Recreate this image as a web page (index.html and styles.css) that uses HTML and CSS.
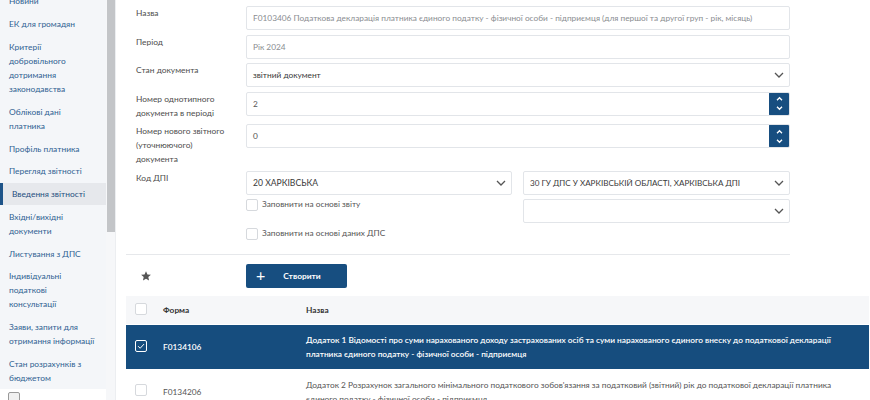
FILE: index.html
```html
<!DOCTYPE html>
<html lang="uk">
<head>
<meta charset="utf-8">
<title>Введення звітності</title>
<link rel="stylesheet" href="styles.css">
</head>
<body>
<div class="page">
  <aside class="sidebar">
    <div class="navwrap">
      <ul class="nav">
        <li>Новини</li>
        <li>ЕК для громадян</li>
        <li>Критерії<br>добровільного<br>дотримання<br>законодавства</li>
        <li>Облікові дані<br>платника</li>
        <li>Профіль платника</li>
        <li>Перегляд звітності</li>
        <li class="active">Введення звітності</li>
        <li>Вхідні/вихідні<br>документи</li>
        <li>Листування з ДПС</li>
        <li>Індивідуальні<br>податкові<br>консультації</li>
        <li>Заяви, запити для<br>отримання інформації</li>
        <li>Стан розрахунків з<br>бюджетом</li>
      </ul>
      <div class="navfoot"><span class="footbox"></span></div>
    </div>
    <div class="scrollbar"><div class="thumb"></div></div>
  </aside>
  <main class="main">
    <div class="form">
      <div class="row">
        <div class="label">Назва</div>
        <div class="field"><div class="input muted">F0103406 Податкова декларація платника єдиного податку - фізичної особи - підприємця (для першої та другої груп - рік, місяць)</div></div>
      </div>
      <div class="row">
        <div class="label">Період</div>
        <div class="field"><div class="input muted">Рік 2024</div></div>
      </div>
      <div class="row">
        <div class="label">Стан документа</div>
        <div class="field"><div class="input select dark"><span>звітний документ</span><svg class="chev" viewBox="0 0 10 6"><path d="M1 1l4 4 4-4"/></svg></div></div>
      </div>
      <div class="row">
        <div class="label">Номер однотипного<br>документа в періоді</div>
        <div class="field"><div class="input spin"><span>2</span><div class="spinbtn"><svg viewBox="0 0 10 6"><path d="M2 5l3-3 3 3"/></svg><svg viewBox="0 0 10 6"><path d="M2 1l3 3 3-3"/></svg></div></div></div>
      </div>
      <div class="row">
        <div class="label">Номер нового звітного<br>(уточнюючого)<br>документа</div>
        <div class="field"><div class="input spin"><span>0</span><div class="spinbtn"><svg viewBox="0 0 10 6"><path d="M2 5l3-3 3 3"/></svg><svg viewBox="0 0 10 6"><path d="M2 1l3 3 3-3"/></svg></div></div></div>
      </div>
      <div class="row">
        <div class="label">Код ДПІ</div>
        <div class="field split">
          <div class="col">
            <div class="input select dark caps"><span>20 ХАРКІВСЬКА</span><svg class="chev" viewBox="0 0 10 6"><path d="M1 1l4 4 4-4"/></svg></div>
            <label class="check"><span class="box"></span><span>Заповнити на основі звіту</span></label>
            <label class="check second"><span class="box"></span><span>Заповнити на основі даних ДПС</span></label>
          </div>
          <div class="col">
            <div class="input select dark caps narrow"><span>30 ГУ ДПС У ХАРКІВСЬКІЙ ОБЛАСТІ, ХАРКІВСЬКА ДПІ</span><svg class="chev" viewBox="0 0 10 6"><path d="M1 1l4 4 4-4"/></svg></div>
            <div class="input select"><span></span><svg class="chev" viewBox="0 0 10 6"><path d="M1 1l4 4 4-4"/></svg></div>
          </div>
        </div>
      </div>
      <div class="divider"></div>
      <div class="actions">
        <div class="star"><svg viewBox="0 0 24 24"><path d="M12 2.5l2.9 6.3 6.9.7-5.2 4.6 1.5 6.8L12 17.4l-6.1 3.5 1.5-6.8-5.2-4.6 6.9-.7z"/></svg></div>
        <button class="btn"><span class="plus">+</span><span>Створити</span></button>
      </div>
    </div>
    <table class="table">
      <thead>
        <tr><th class="cb"><span class="box"></span></th><th class="code">Форма</th><th>Назва</th></tr>
      </thead>
      <tbody>
        <tr class="sel">
          <td class="cb"><span class="box checked"><svg viewBox="0 0 12 12"><path d="M2.5 6.2l2.5 2.5 4.6-5"/></svg></span></td>
          <td class="code">F0134106</td>
          <td>Додаток 1 Відомості про суми нарахованого доходу застрахованих осіб та суми нарахованого єдиного внеску до податкової декларації платника єдиного податку - фізичної особи - підприємця</td>
        </tr>
        <tr>
          <td class="cb"><span class="box"></span></td>
          <td class="code">F0134206</td>
          <td>Додаток 2 Розрахунок загального мінімального податкового зобов'язання за податковий (звітний) рік до податкової декларації платника єдиного податку - фізичної особи - підприємця</td>
        </tr>
      </tbody>
    </table>
  </main>
</div>
</body>
</html>
```
FILE: styles.css
```css
* { box-sizing: border-box; }
html, body { margin: 0; padding: 0; }
body {
  width: 870px;
  height: 400px;
  overflow: hidden;
  background: #fff;
  font-family: "Lato", "Open Sans", "Noto Sans", sans-serif;
  font-size: 8.4px;
  color: #444;
}
.page { display: flex; height: 400px; }

/* sidebar */
.sidebar { width: 116px; flex: none; display: flex; height: 400px; }
.navwrap { width: 106px; display: flex; flex-direction: column; }
.nav {
  list-style: none;
  margin: -10px 0 0 0;
  padding: 0;
  background: #f4f6f9;
}
.nav li {
  padding: 4.4px 6px 4.4px 9px;
  line-height: 14px;
  color: #2f6192;
  font-size: 8.4px;
  white-space: nowrap;
}
.nav li.active {
  background: #e6e8ec;
  border-left: 3px solid #1e5489;
  padding-left: 9px;
  color: #1f4f7f;
}
.navfoot { flex: 1; background: #fff; }
.footbox {
  display: block;
  margin: 3px 0 0 8px;
  width: 12px; height: 10px;
  border: 1px solid #999;
  border-radius: 2px;
  background: #f0f0f0;
}
.scrollbar { width: 10px; background: #f6f7f9; border-right: 1px solid #eceef1; }
.thumb { height: 232px; width: 8px; margin-left: 1px; background: #c3c5c8; }

/* main */
.main { flex: 1; padding-left: 10px; padding-top: 6px; }
.form { width: 664px; }
.row { display: grid; grid-template-columns: 120px 544px; margin-bottom: 4.6px; }
.label {
  padding-left: 10px;
  line-height: 14px;
  color: #4d4d4d;
  font-size: 8.4px;
  white-space: nowrap;
}
.input {
  height: 24px;
  border: 1px solid #e2e5e9;
  border-radius: 2px;
  display: flex;
  align-items: center;
  padding: 0 6px;
  font-size: 8.3px;
  color: #555;
  white-space: nowrap;
  overflow: hidden;
}
.input.muted { color: #8a8d91; }
.input.dark { color: #3a3a3a; }
.input.caps { font-size: 8.6px; }
.input.narrow { font-size: 8.1px; }
.select { justify-content: space-between; padding-right: 5px; }
.chev { width: 10px; height: 6px; fill: none; stroke: #555; stroke-width: 1.3; flex: none; }
.spin { padding-right: 0; justify-content: space-between; }
.spinbtn {
  width: 21px; height: 24px;
  margin-right: -1px;
  background: #174e80;
  border-radius: 2px;
  display: flex; flex-direction: column; align-items: center; justify-content: center; gap: 5px;
}
.spinbtn svg { width: 9px; height: 5px; fill: none; stroke: #fff; stroke-width: 1.6; }

.split { display: grid; grid-template-columns: 266px 267px; column-gap: 11px; }
.col { display: flex; flex-direction: column; gap: 4px; }
.check { display: flex; align-items: flex-start; gap: 4px; color: #555; font-size: 8.3px; line-height: 11px; }
.check.second { margin-top: 13px; }
.box {
  display: inline-flex; align-items: center; justify-content: center;
  width: 12px; height: 12px;
  border: 1px solid #d6d9dd;
  border-radius: 2px;
  background: #fff;
  flex: none;
}

.divider { height: 1px; background: #e6e8eb; margin-top: 14px; }
.actions { display: grid; grid-template-columns: 120px auto; align-items: center; margin-top: 9px; height: 24px; }
.star { padding-left: 14px; display: flex; }
.star svg { width: 12px; height: 12px; fill: #555; }
.btn {
  width: 101px; height: 24px;
  border: 0; border-radius: 2px;
  background: #174e80;
  color: #fff;
  font-family: inherit;
  font-weight: 700;
  font-size: 8.4px;
  display: flex; align-items: center;
  padding: 0 0 0 10px;
  gap: 18px;
}
.plus { font-size: 16px; font-weight: 400; line-height: 1; margin-top: -2px; }

.table {
  margin-top: 8px;
  width: 743px;
  border-collapse: collapse;
  font-size: 8.3px;
}
.table th {
  background: #f6f7f9;
  height: 29px;
  text-align: left;
  font-weight: 700;
  color: #333;
  padding: 0 8px;
}
.table td { padding: 8px; line-height: 14px; color: #555; vertical-align: middle; }
.table .cb { width: 29px; padding: 0 0 0 9px; }
.table .code { width: 143px; }
.table tr.sel td { background: #164d7e; color: #fff; font-weight: 600; }
.table tr.sel { border-top: 1px solid #fff; border-bottom: 1px solid #fff; }
.box.checked { background: transparent; border-color: #fff; }
.box.checked svg { width: 10px; height: 10px; fill: none; stroke: #fff; stroke-width: 1.2; }
```
